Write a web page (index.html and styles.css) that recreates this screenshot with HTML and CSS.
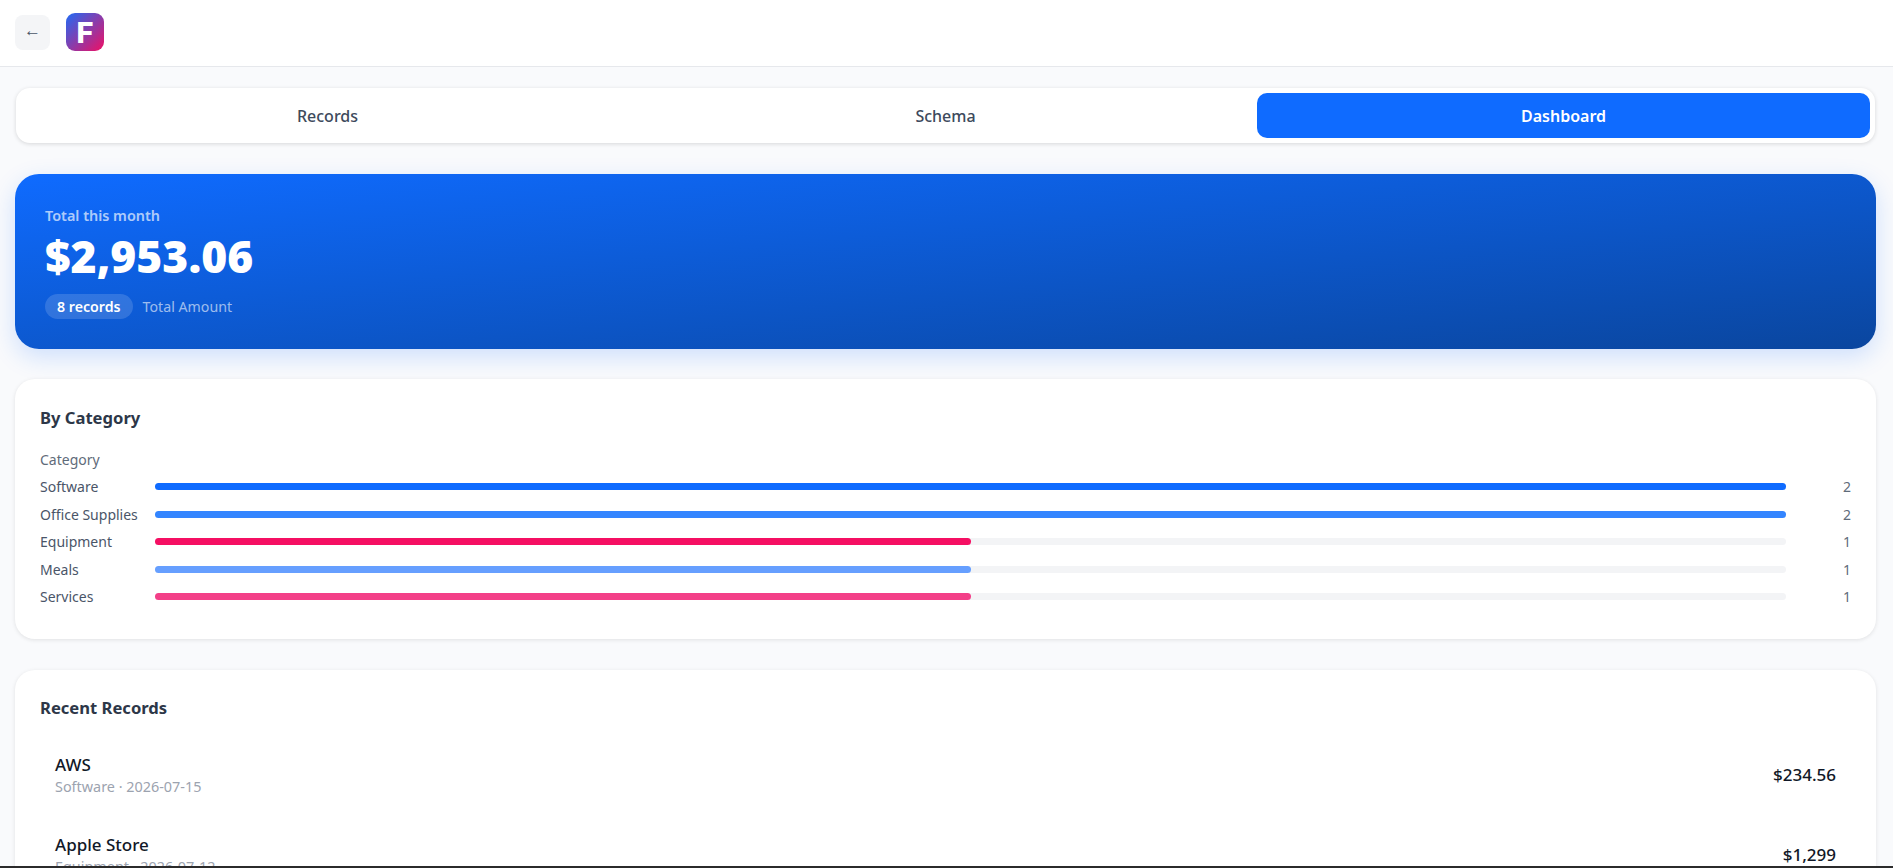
FILE: index.html
```html
<!DOCTYPE html>
<html lang="en">
<head>
  <meta charset="UTF-8" />
  <meta name="viewport" content="width=device-width, initial-scale=1.0"/>
  <title>Dashboard</title>
  <link rel="stylesheet" href="styles.css">
</head>
<body>
  <div class="app">
    <header class="topbar">
      <button class="back-btn">←</button>
      <div class="logo">F</div>
    </header>

    <main class="content">
      <nav class="tabs">
        <button class="tab">Records</button>
        <button class="tab">Schema</button>
        <button class="tab tab-active">Dashboard</button>
      </nav>

      <section class="hero">
        <div class="hero-label">Total this month</div>
        <div class="hero-amount">$2,953.06</div>
        <div class="hero-meta">
          <span class="pill">8 records</span>
          <span class="hero-note">Total Amount</span>
        </div>
      </section>

      <section class="card card-category">
        <h2 class="card-title">By Category</h2>
        <div class="chart-label">Category</div>
        <div class="bar-row">
          <span class="bar-name">Software</span>
          <div class="bar-track"><div class="bar-fill fill-blue" style="width: 100%"></div></div>
          <span class="bar-value">2</span>
        </div>
        <div class="bar-row">
          <span class="bar-name">Office Supplies</span>
          <div class="bar-track"><div class="bar-fill fill-mid" style="width: 100%"></div></div>
          <span class="bar-value">2</span>
        </div>
        <div class="bar-row">
          <span class="bar-name">Equipment</span>
          <div class="bar-track"><div class="bar-fill fill-red" style="width: 50%"></div></div>
          <span class="bar-value">1</span>
        </div>
        <div class="bar-row">
          <span class="bar-name">Meals</span>
          <div class="bar-track"><div class="bar-fill fill-light" style="width: 50%"></div></div>
          <span class="bar-value">1</span>
        </div>
        <div class="bar-row">
          <span class="bar-name">Services</span>
          <div class="bar-track"><div class="bar-fill fill-pink" style="width: 50%"></div></div>
          <span class="bar-value">1</span>
        </div>
      </section>

      <section class="card card-records">
        <h2 class="card-title">Recent Records</h2>
        <div class="record">
          <div>
            <div class="record-name">AWS</div>
            <div class="record-sub">Software · 2026-07-15</div>
          </div>
          <div class="record-amount">$234.56</div>
        </div>
        <div class="record">
          <div>
            <div class="record-name">Apple Store</div>
            <div class="record-sub">Equipment · 2026-07-12</div>
          </div>
          <div class="record-amount">$1,299</div>
        </div>
      </section>
    </main>
  </div>
</body>
</html>
```

FILE: styles.css
```css
* {
  box-sizing: border-box;
}
body, html {
  margin: 0;
  padding: 0;
  height: 100%;
  overflow: hidden;
  font-family: "Noto Sans", "Open Sans", sans-serif;
  background-color: #f9fafc;
  color: #2d3748;
}

.app {
  height: 868px;
  overflow: hidden;
  border-bottom: 2px solid #2b2b2b;
}

.topbar {
  display: flex;
  align-items: center;
  gap: 16px;
  height: 67px;
  padding: 0 15px 2px;
  background-color: #fff;
  border-bottom: 1px solid #e6e8ec;
}

.back-btn {
  width: 35px;
  height: 35px;
  padding: 0 0 2px;
  border: none;
  border-radius: 8px;
  background-color: #f4f5f7;
  color: #4a5568;
  font-size: 17px;
  font-family: "Liberation Sans", sans-serif;
}

.logo {
  display: flex;
  align-items: center;
  justify-content: center;
  width: 38px;
  height: 38px;
  border-radius: 9px;
  background: linear-gradient(135deg, #1f6bf5, #f00f63);
  color: #fff;
  font-family: Inter, sans-serif;
  font-size: 29px;
  font-weight: 800;
  line-height: 1;
}

.content {
  padding: 21px 17px 21px 15px;
}

.tabs {
  display: flex;
  gap: 5px;
  padding: 5px;
  margin: 0 1px;
  border-radius: 14px;
  background-color: #fff;
  box-shadow: 0 1px 4px rgba(0, 0, 0, 0.14);
}

.tab {
  flex: 1;
  height: 45px;
  border: none;
  border-radius: 10px;
  background: none;
  color: #3d4a5c;
  font-family: inherit;
  font-size: 16px;
  font-weight: 500;
}

.tab-active {
  background-color: #0f6bff;
  color: #fff;
  font-weight: 600;
}

.hero {
  height: 175px;
  margin-top: 31px;
  padding: 32px 30px 0;
  border-radius: 24px;
  background: linear-gradient(to bottom right, #0f6bff, #0a469f);
  box-shadow: 0 8px 24px rgba(15, 107, 255, 0.18);
  color: #fff;
}

.hero-label {
  font-size: 14.4px;
  font-weight: 600;
  line-height: 20px;
  color: rgba(255, 255, 255, 0.68);
}

.hero-amount {
  margin-top: 2px;
  font-size: 44.4px;
  font-weight: 900;
  line-height: 56px;
}

.hero-meta {
  display: flex;
  align-items: center;
  gap: 10px;
  margin-top: 10px;
}

.pill {
  padding: 3px 12px;
  border-radius: 13px;
  background-color: rgba(255, 255, 255, 0.15);
  font-size: 14.2px;
  font-weight: 600;
  line-height: 19px;
}

.hero-note {
  font-size: 14.2px;
  color: rgba(255, 255, 255, 0.6);
}

.card {
  margin-top: 30px;
  padding: 26px 25px 25px;
  border-radius: 20px;
  background-color: #fff;
  box-shadow: 0 1px 4px rgba(0, 0, 0, 0.1);
}

.card-category {
  height: 260px;
}

.card-records {
  margin-top: 31px;
  padding-top: 25px;
}

.card-title {
  margin: 0 0 16px;
  font-size: 16.6px;
  font-weight: 700;
  line-height: 26px;
}

.card-records .card-title {
  margin-bottom: 14px;
}

.chart-label {
  font-size: 14px;
  line-height: 26px;
  color: #5f6b7a;
}

.bar-row {
  display: flex;
  align-items: center;
  height: 27.5px;
}

.bar-name {
  width: 115px;
  flex-shrink: 0;
  font-size: 14px;
  color: #4a5568;
}

.bar-track {
  flex: 1;
  height: 7px;
  border-radius: 4px;
  background-color: #f3f4f6;
}

.bar-fill {
  height: 100%;
  border-radius: 4px;
}

.fill-blue { background-color: #0f6bff; }
.fill-mid { background-color: #3385ff; }
.fill-red { background-color: #f50f63; }
.fill-light { background-color: #669fff; }
.fill-pink { background-color: #f33f88; }

.bar-value {
  width: 65px;
  flex-shrink: 0;
  font-size: 14px;
  text-align: right;
  color: #5f6b7a;
}

.record {
  display: flex;
  align-items: center;
  justify-content: space-between;
  padding: 18px 15px;
}

.record-name {
  font-size: 17px;
  font-weight: 500;
  line-height: 24px;
  color: #111827;
}

.record-sub {
  font-size: 14.4px;
  line-height: 20px;
  color: #9ca3af;
}

.record-amount {
  padding-bottom: 2px;
  font-size: 17px;
  font-weight: 500;
  color: #111827;
}
```
